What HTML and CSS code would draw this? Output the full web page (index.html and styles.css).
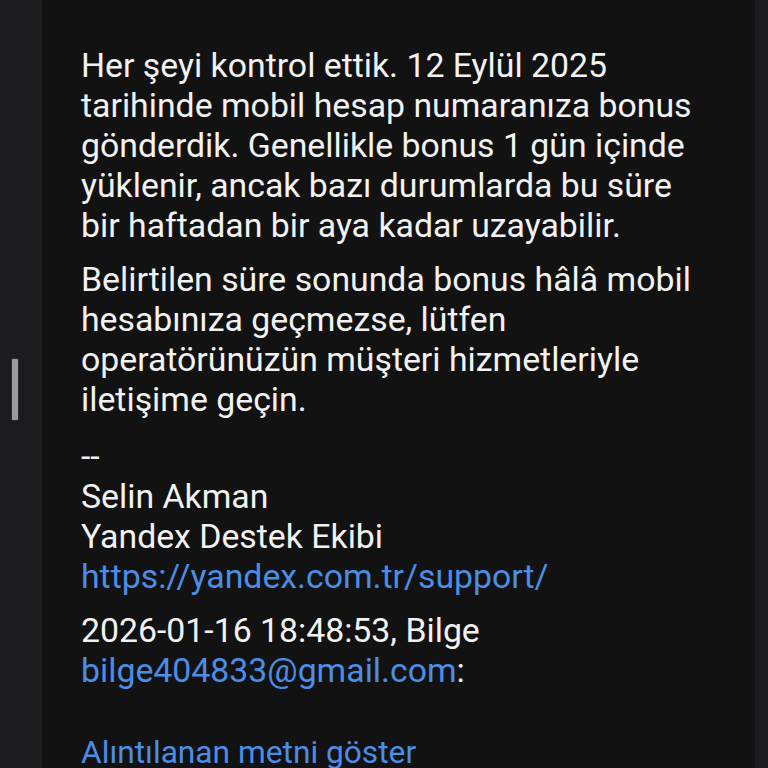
FILE: index.html
```html
<!DOCTYPE html>
<html lang="tr">
  <head>
    <meta charset="UTF-8" />
    <title>Mesaj</title>
    <link rel="stylesheet" href="styles.css">
  </head>
  <body>
    <div class="screen">
      <div class="rail">
        <div class="scroll-thumb"></div>
      </div>
      <div class="message">
        <p>Her şeyi kontrol ettik. 12 Eylül 2025 tarihinde mobil hesap numaranıza bonus gönderdik. Genellikle bonus 1 gün içinde yüklenir, ancak bazı durumlarda bu süre bir haftadan bir aya kadar uzayabilir.</p>
        <p>Belirtilen süre sonunda bonus hâlâ mobil hesabınıza geçmezse, lütfen operatörünüzün müşteri hizmetleriyle iletişime geçin.</p>
        <p class="signature">--<br>Selin Akman<br>Yandex Destek Ekibi<br><a href="#">https://yandex.com.tr/support/</a></p>
        <p>2026-01-16 18:48:53, Bilge <a href="#">bilge404833@gmail.com</a>:</p>
        <a class="quoted" href="#">Alıntılanan metni göster</a>
      </div>
      <div class="edge"></div>
    </div>
  </body>
</html>
```

FILE: styles.css
```css
html, body {
  margin: 0;
  height: 100%;
  background: #121212;
}
.screen {
  display: flex;
  height: 768px;
  overflow: hidden;
  font-family: Roboto, "Noto Sans", sans-serif;
}
.rail {
  width: 42px;
  flex-shrink: 0;
  background: #1c1c1e;
  display: flex;
  align-items: center;
  padding-left: 11px;
  box-sizing: border-box;
}
.scroll-thumb {
  width: 6px;
  height: 61px;
  margin-top: 11px;
  background: #9a9a9a;
  border: 1px solid #2a2a2a;
  border-radius: 2px;
}
.message {
  flex: 1;
  padding: 46px 46px 0 39px;
  color: #f2f2f2;
  font-size: 33.8px;
  line-height: 40px;
}
.message p {
  margin: 0 0 14px;
}
.message p.signature {
  margin-top: 17px;
}
.message a {
  color: #4b8ee6;
  text-decoration: none;
}
.message a.quoted {
  display: block;
  margin-top: 42px;
  font-size: 31.7px;
}
.edge {
  width: 13px;
  flex-shrink: 0;
  background: #1c1c1e;
}
```
